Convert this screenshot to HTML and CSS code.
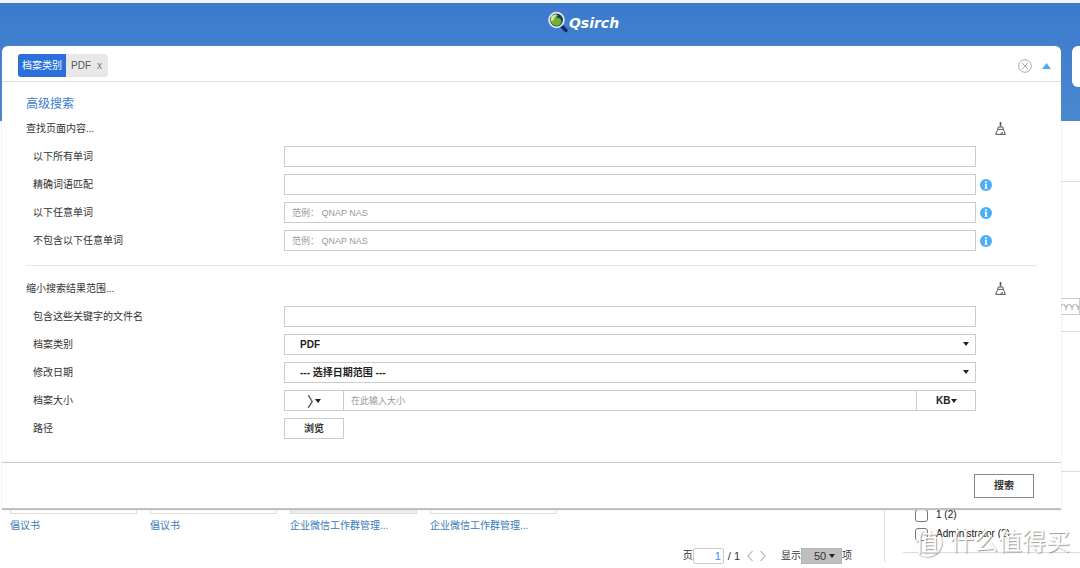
FILE: index.html
```html
<!DOCTYPE html>
<html lang="zh-CN">
<head>
<meta charset="utf-8">
<meta name="viewport" content="width=device-width, initial-scale=1">
<title>Qsirch</title>
<link rel="stylesheet" href="styles.css">
</head>
<body>
<svg class="sprite" aria-hidden="true">
  <symbol id="broom" viewBox="0 0 11 13">
    <path d="M5.500 0v4.500" stroke-width="1.600"/>
    <path d="M3.200 5h4.600l.5 2.400H2.700zM2.500 7.500L.7 12.400h9.600L8.500 7.500M5.600 11.200h1.800V10" fill="none"/>
  </symbol>
  <symbol id="info" viewBox="0 0 12 12">
    <circle cx="6" cy="6" r="6" fill="#47aef7"/>
    <path d="M5 2.200h2v1.600H5zM4.500 4.700H7v4.200h.6v.8H4.400v-.8H5V5.500h-.5z" fill="#fff"/>
  </symbol>
</svg>

<header class="header">
  <div class="brand">
    <svg class="brand-icon" viewBox="0 0 22 22" aria-hidden="true">
      <path d="M14 14.500l5 5" stroke="#17265c" stroke-width="3.400" stroke-linecap="round"/>
      <circle cx="9.500" cy="9" r="7.400" fill="#1d3a63" stroke="#dfe6ea" stroke-width="1.800"/>
      <path d="M4 5.500C6 3.200 9 3 11 4l-1.500 2.500 3.500 1 1.500 2.500c-.5 3-2.500 4.700-5 4.700-3-.2-5.500-2.500-5.700-5z" fill="#6fb52c"/>
      <path d="M4.200 6C6 3.400 8.500 3 10 3.700L7.500 6.500l-1 3-3 .5z" fill="#d4eba5"/>
    </svg>
    <span class="brand-name">Qsirch</span>
  </div>
  <div class="header-box"></div>
</header>

<main class="main">
  <section class="results">
    <div class="cards">
      <div class="card"><div class="thumb"></div><a href="#">倡议书</a></div>
      <div class="card"><div class="thumb"></div><a href="#">倡议书</a></div>
      <div class="card"><div class="thumb thumb-filled"></div><a href="#">企业微信工作群管理...</a></div>
      <div class="card"><div class="thumb"></div><a href="#">企业微信工作群管理...</a></div>
    </div>
    <nav class="pager">
      <label for="page">页</label>
      <input id="page" class="page-input" type="text" value="1">
      <span class="page-total">/ 1</span>
      <button class="page-step" type="button" aria-label="Previous"><svg viewBox="0 0 6 12"><path d="M5.500 1L.8 6l4.700 5"/></svg></button>
      <button class="page-step page-next" type="button" aria-label="Next"><svg viewBox="0 0 6 12"><path d="M.5 1l4.700 5L.5 11"/></svg></button>
      <label for="size">显示</label>
      <span class="select page-size"><select id="size"><option>50</option></select></span>
      <span>项</span>
    </nav>
  </section>
  <aside class="sidebar">
    <div class="facet facet-head"></div>
    <div class="facet facet-date"><input class="date" type="text" placeholder="YYYY/MM/DD" aria-label="Date"></div>
    <div class="facet facet-mid"></div>
    <div class="facet facet-list">
      <label class="check"><input type="checkbox"><span>1 (2)</span></label>
      <label class="check"><input type="checkbox"><span>Administrator (2)</span></label>
    </div>
  </aside>
</main>

<form class="panel">
  <div class="panel-top">
    <div class="tag"><span class="tag-name">档案类别</span><span class="tag-value">PDF</span><button class="tag-close" type="button" aria-label="Remove">x</button></div>
    <div class="panel-actions">
      <button class="icon-button" type="button" aria-label="Clear"><svg class="clear-icon" viewBox="0 0 14 14"><circle cx="7" cy="7" r="6.300"/><path d="M4 4l6 6M10 4l-6 6"/></svg></button>
      <button class="icon-button" type="button" aria-label="Collapse"><svg class="collapse-icon" viewBox="0 0 9 6"><path d="M4.500 0L9 6H0z"/></svg></button>
    </div>
  </div>

  <div class="panel-body">
    <h2 class="title">高级搜索</h2>
    <div class="section-head"><h3>查找页面内容...</h3><button class="icon-button" type="button" aria-label="Reset"><svg class="broom"><use href="#broom"/></svg></button></div>
    <div class="rows">
      <div class="row"><label for="all">以下所有单词</label><input id="all" class="field" type="text"></div>
      <div class="row"><label for="exact">精确词语匹配</label><input id="exact" class="field" type="text"><svg class="info"><use href="#info"/></svg></div>
      <div class="row"><label for="any">以下任意单词</label><input id="any" class="field" type="text" placeholder="范例： QNAP NAS"><svg class="info"><use href="#info"/></svg></div>
      <div class="row"><label for="none">不包含以下任意单词</label><input id="none" class="field" type="text" placeholder="范例： QNAP NAS"><svg class="info"><use href="#info"/></svg></div>
    </div>
    <hr class="divider">
    <div class="section-head"><h3>缩小搜索结果范围...</h3><button class="icon-button" type="button" aria-label="Reset"><svg class="broom"><use href="#broom"/></svg></button></div>
    <div class="rows">
      <div class="row"><label for="name">包含这些关键字的文件名</label><input id="name" class="field" type="text"></div>
      <div class="row"><label for="type">档案类别</label><span class="select"><select id="type" class="field"><option>PDF</option></select></span></div>
      <div class="row"><label for="date">修改日期</label><span class="select"><select id="date" class="field"><option>--- 选择日期范围 ---</option></select></span></div>
      <div class="row"><label for="amount">档案大小</label>
        <div class="group">
          <span class="select select-small select-op"><select class="field" aria-label="Comparison"><option>〉</option></select></span>
          <input id="amount" class="field" type="text" placeholder="在此输入大小">
          <span class="select select-small"><select class="field" aria-label="Unit"><option>KB</option></select></span>
        </div>
      </div>
      <div class="row"><label for="path">路径</label><button id="path" class="browse" type="button">浏览</button></div>
    </div>
  </div>

  <div class="panel-foot"><button class="submit" type="button">搜索</button></div>
</form>

<div class="watermark" aria-hidden="true"><span class="watermark-mark">值</span><span>什么值得买</span></div>
</body>
</html>
```

FILE: styles.css
```css
* { box-sizing: border-box; }

body {
  margin: 0;
  padding-top: 3px;
  position: relative;
  min-height: 100vh;
  overflow-x: hidden;
  background: linear-gradient(#f4f6f6 3px, #fff 3px);
  color: #333;
  font: 10px/14px "Liberation Sans", "Noto Sans CJK SC", sans-serif;
}

button, input, select { margin: 0; padding: 0; border-radius: 0; font: inherit; color: inherit; }
svg { display: block; }
h2, h3 { margin: 0; font-weight: 400; }
a { color: #3a7ab8; text-decoration: none; }
.sprite { position: absolute; width: 0; height: 0; }

/* Header */
.header {
  height: 118px;
  display: flex;
  flex-direction: column;
  background: linear-gradient(#3c7acd, #4a88d0);
}
.brand {
  height: 43px;
  padding: 8px 0 0 86px;
  display: flex;
  justify-content: center;
  align-items: flex-start;
}
.brand-icon { width: 22px; height: 22px; }
.brand-name {
  color: #fff;
  font: italic 700 14px/24px "DejaVu Sans", sans-serif;
}
.header-box {
  width: 8px;
  height: 41px;
  margin-left: auto;
  border-radius: 6px 0 0 6px;
  background: #fff;
}

/* Results under the panel */
.main { display: flex; }
.results { flex: 1; padding: 12px 10px 0; }
.cards { display: flex; gap: 13px; }
.card { width: 127px; }
.thumb { height: 381px; margin-bottom: 5px; border: 1px solid #ddd; }
.thumb-filled { background: #eee; }

.pager { display: flex; align-items: center; justify-content: flex-end; padding: 15px 22px 0 0; height: 31px; }
.page-input, .page-total, .page-size { font-size: 11px; }
.page-input {
  width: 31px;
  height: 16px;
  padding-right: 2px;
  border: 1px solid #ccc;
  border-radius: 2px;
  text-align: right;
  color: #3b8ef0;
}
.page-total { padding: 0 7px 0 4px; }
.page-step { width: 6px; padding: 0; border: 0; background: none; }
.page-step svg { width: 6px; height: 12px; fill: none; stroke: #999; }
.page-next { margin: 0 15px 0 7px; }
.page-size { width: 41px; flex: none; }
.page-size select { height: 16px; padding-left: 12px; border: 1px solid #b4b4b4; background: #bfbfbf; }

/* Filters under the panel */
.sidebar { width: 196px; height: 441px; padding-left: 18px; border-left: 1px solid #ddd; }
.facet { border-bottom: 1px solid #ddd; }
.facet-head { height: 61px; }
.facet-date { height: 150px; padding-top: 116px; }
.date { width: 100%; height: 17px; padding-left: 153px; border: 1px solid #ccc; font-size: 9px; }
.facet-mid { height: 140px; }
.facet-list { display: grid; gap: 5px; padding: 36px 0 11px 12px; }
.check { display: flex; align-items: center; gap: 8px; height: 14px; color: #111; }
.check input { appearance: none; width: 13px; height: 13px; border: 1px solid #777; border-radius: 3px; }

/* Advanced search panel, laid over the page */
.panel {
  position: absolute;
  top: 46px;
  left: 2px;
  right: 19px;
  border: 0 solid #c0c0c0;
  border-bottom-width: 2px;
  border-radius: 6px 6px 0 0;
  background: #fff;
  box-shadow: 0 0 1px #999;
}
.panel-top {
  height: 36px;
  padding: 4px 10px 0 16px;
  display: flex;
  align-items: center;
  justify-content: space-between;
  border-bottom: 1px solid #ddd;
}
.tag { display: flex; height: 23px; line-height: 23px; border-radius: 3px; overflow: hidden; background: #e8e8e8; color: #555; }
.tag-name { padding: 0 4px; background: #2b6fdb; color: #fff; }
.tag-value { padding-left: 5px; }
.tag-close { width: 17px; border: 0; background: none; color: #777; }
.panel-actions { display: flex; align-items: center; gap: 10px; }
.icon-button { border: 0; background: none; }
.clear-icon { width: 14px; height: 14px; fill: none; stroke: #aaa; }
.collapse-icon { width: 9px; height: 6px; fill: #47aef7; }

.panel-body { padding: 13px 24px 23px; }
.title { color: #3a7bd5; font-size: 12px; line-height: 18px; margin-bottom: 5px; }
.section-head {
  height: 20px;
  margin-bottom: 8px;
  padding-right: 31px;
  display: flex;
  align-items: center;
  justify-content: space-between;
}
.section-head h3 { padding-top: 2px; font-size: 10px; }
.broom { width: 11px; height: 13px; stroke: #555; fill: none; }

.rows { display: grid; gap: 7px; }
.row {
  display: grid;
  grid-template-columns: 247px 1fr 12px;
  column-gap: 4px;
  align-items: center;
  height: 21px;
  padding: 0 45px 0 7px;
}
.field { width: 100%; height: 21px; padding: 0 7px; border: 1px solid #ccc; background: #fff; }
.field::placeholder { color: #999; font-size: 9px; }
.date::placeholder { color: #999; }
.info { width: 12px; height: 12px; }
.divider { height: 1px; margin: 14px 0 12px; border: 0; background: #e6e6e6; }

.select { position: relative; display: block; }
.select select { width: 100%; appearance: none; }
.select .field { padding-left: 15px; font-weight: 700; color: #222; }
.select::after {
  content: "";
  position: absolute;
  top: 8px;
  right: 7px;
  border: 3px solid transparent;
  border-top: 4px solid #222;
  border-bottom: 0;
  pointer-events: none;
}
.page-size::after { top: 6px; }

.group { display: grid; grid-template-columns: 60px 1fr 60px; }
.group > .field { border-width: 1px 0; }
.select-small .field { padding-left: 19px; }
.select-small::after { top: 9px; right: 19px; }
.select-op .field { padding-left: 22px; font-size: 14px; font-weight: 400; }
.select-op::after { right: 23px; }
.browse { width: 60px; height: 21px; border: 1px solid #ccc; background: #fff; font-weight: 700; }

.panel-foot { display: flex; justify-content: flex-end; padding: 11px 27px 10px; border-top: 1px solid #ccc; }
.submit { width: 60px; height: 24px; border: 1px solid #888; background: #fff; font-weight: 700; }

/* Site watermark over the lower right corner */
.watermark {
  position: absolute;
  right: 10px;
  top: 526px;
  display: flex;
  align-items: center;
  gap: 8px;
  color: #fff;
  font-size: 24px;
  line-height: 31px;
  text-shadow: 1px 1px 1px #999;
}
.watermark-mark {
  width: 30px;
  height: 30px;
  border-radius: 50%;
  box-shadow: 1px 1px 1px #bbb;
  text-align: center;
}
```
